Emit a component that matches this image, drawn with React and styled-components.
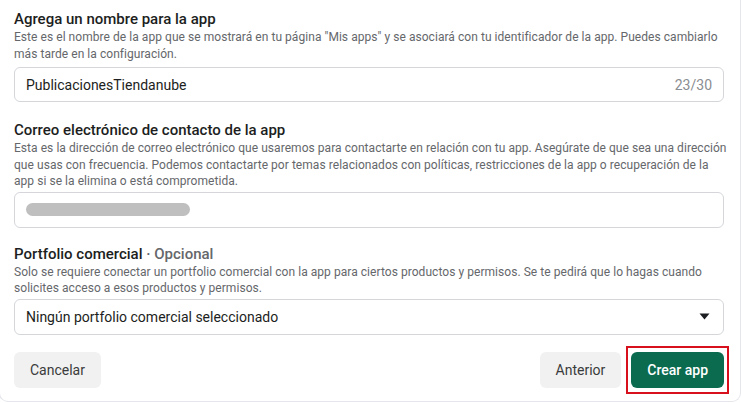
import React from "react";
import styled, { createGlobalStyle } from "styled-components";

const Global = createGlobalStyle`
  html, body {
    margin: 0;
    padding: 0;
    background: #ffffff;
  }
  body {
    font-family: Roboto, "Noto Sans", Arial, sans-serif;
    color: #1c1e21;
    overflow: hidden;
  }
`;

const Card = styled.div`
  box-sizing: border-box;
  width: 742px;
  height: 402px;
  margin-left: -1px;
  background: #fff;
  border: 1px solid #e4e6eb;
  border-top: none;
  border-radius: 0 0 9px 9px;
  padding: 9px 16px 0 14px;
  display: flex;
  flex-direction: column;
`;

const Section = styled.div`
  display: flex;
  flex-direction: column;
  margin-bottom: ${(p) => p.$gap || 0}px;
`;

const Title = styled.div`
  font-size: 15px;
  line-height: 20px;
  font-weight: 500;
  color: #1c1e21;
`;

const Optional = styled.span`
  color: #65676b;
  font-weight: 500;
`;

const Desc = styled.div`
  font-size: 12px;
  line-height: 16.5px;
  letter-spacing: 0.05px;
  white-space: nowrap;
  color: #65676b;
  margin-bottom: ${(p) => p.$gap || 4}px;
`;

const Field = styled.div`
  box-sizing: border-box;
  height: ${(p) => p.$h || 35}px;
  border: 1px solid #d4d6da;
  border-radius: 6px;
  display: flex;
  align-items: center;
  justify-content: space-between;
  padding: 0 ${(p) => p.$pr || 11}px 0 11px;
  font-size: 14px;
  color: #1c1e21;
`;

const Counter = styled.span`
  color: #8a8d91;
  font-size: 14px;
`;

const Redacted = styled.div`
  width: 164px;
  height: 13px;
  border-radius: 7px;
  background: #bfbfbf;
`;

const Footer = styled.div`
  display: flex;
  align-items: center;
  justify-content: space-between;
  margin-top: 11px;
`;

const Group = styled.div`
  display: flex;
  align-items: center;
  gap: 5px;
`;

const Button = styled.button`
  box-sizing: border-box;
  height: 36px;
  padding: 0 ${(p) => p.$px || 16}px;
  border: none;
  border-radius: 6px;
  font-family: Roboto, "Noto Sans", Arial, sans-serif;
  font-size: 14px;
  font-weight: ${(p) => (p.$primary ? 500 : 400)};
  background: ${(p) => (p.$primary ? "#0b6b4f" : "#f1f1f1")};
  color: ${(p) => (p.$primary ? "#ffffff" : "#3a3b3c")};
  cursor: pointer;
`;

const Highlight = styled.div`
  border: 2px solid #d8101e;
  padding: 4px 3px;
  margin-right: -5px;
  display: flex;
`;

const Caret = () => (
  <svg width="11" height="7" viewBox="0 0 11 7">
    <path d="M0.5 0.5 H10.5 L5.5 6.5 Z" fill="#1c1e21" />
  </svg>
);

export default function App() {
  return (
    <>
      <Global />
      <Card>
        <Section $gap={18}>
          <Title>Agrega un nombre para la app</Title>
          <Desc $gap={5}>
            Este es el nombre de la app que se mostrará en tu página "Mis apps" y se asociará con tu
            identificador de la app. Puedes cambiarlo
            <br />
            más tarde en la configuración.
          </Desc>
          <Field $h={35}>
            <span>PublicacionesTiendanube</span>
            <Counter>23/30</Counter>
          </Field>
        </Section>

        <Section $gap={16}>
          <Title>Correo electrónico de contacto de la app</Title>
          <Desc $gap={2}>
            Esta es la dirección de correo electrónico que usaremos para contactarte en relación con tu
            app. Asegúrate de que sea una dirección
            <br />
            que usas con frecuencia. Podemos contactarte por temas relacionados con políticas,
            restricciones de la app o recuperación de la
            <br />
            app si se la elimina o está comprometida.
          </Desc>
          <Field $h={36}>
            <Redacted />
          </Field>
        </Section>

        <Section>
          <Title>
            Portfolio comercial <Optional>· Opcional</Optional>
          </Title>
          <Desc $gap={2}>
            Solo se requiere conectar un portfolio comercial con la app para ciertos productos y
            permisos. Se te pedirá que lo hagas cuando
            <br />
            solicites acceso a esos productos y permisos.
          </Desc>
          <Field $h={36} $pr={13}>
            <span>Ningún portfolio comercial seleccionado</span>
            <Caret />
          </Field>
        </Section>

        <Footer>
          <Button>Cancelar</Button>
          <Group>
            <Button>Anterior</Button>
            <Highlight>
              <Button $primary>Crear app</Button>
            </Highlight>
          </Group>
        </Footer>
      </Card>
    </>
  );
}
